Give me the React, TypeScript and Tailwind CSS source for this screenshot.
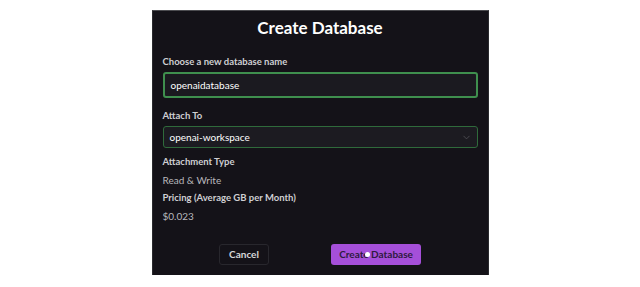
import React from 'react';
import { ChevronDown } from 'lucide-react';

const Label = ({ children }: { children: React.ReactNode }) => (
    <div className="text-[9.5px] font-bold text-[#cfcfd2] leading-[14px]">{children}</div>
);

export default function App() {
    return (
        <div className="w-[640px] h-[287px] bg-white overflow-hidden" style={{ fontFamily: 'Lato, "Noto Sans", sans-serif' }}>
            <div className="mx-auto mt-[10px] w-[337px] h-[265px] bg-[#141218] border-t border-[#4c4c50] border-x border-x-[#2a2a2e] px-[10px] flex flex-col">
                <h1 className="text-center text-white text-[17px] font-bold leading-[24px] mt-[5px]">Create Database</h1>

                <div className="mt-[15px]">
                    <Label>Choose a new database name</Label>
                </div>
                <div className="mt-[3px] h-[26px] rounded-[3px] border-2 border-[#3f8f4e] bg-[#1b1a20] flex items-center px-[6px]">
                    <span className="text-[10px] text-white">openaidatabase</span>
                </div>

                <div className="mt-[11px]">
                    <Label>Attach To</Label>
                </div>
                <div className="mt-[3px] h-[22px] rounded-[3px] border border-[#2f6a3b] bg-[#1c1b21] flex items-center justify-between pl-[6px] pr-[5px]">
                    <span className="text-[10px] text-white">openai-workspace</span>
                    <ChevronDown size={11} className="text-[#5c5c62]" strokeWidth={1.5} />
                </div>

                <div className="mt-[7px]">
                    <Label>Attachment Type</Label>
                </div>
                <div className="mt-[4px] text-[10px] text-[#b8b8bc] leading-[14px]">Read &amp; Write</div>

                <div className="mt-[4px]">
                    <Label>Pricing (Average GB per Month)</Label>
                </div>
                <div className="mt-[4px] text-[10px] text-[#b8b8bc] leading-[14px]">$0.023</div>

                <div className="mt-[21px] flex justify-center items-center gap-[62px]">
                    <button className="w-[50px] h-[21px] rounded-[3px] border border-[#28272d] bg-[#141218] text-[10px] font-bold text-[#d6d6d8]">
                        Cancel
                    </button>
                    <button className="relative w-[90px] h-[21px] rounded-[3px] bg-[#a54fd9] text-[10px] font-bold text-[#2e1a40]">
                        Create Database
                        <span className="absolute left-[34px] top-[8px] w-[5px] h-[5px] rounded-full bg-white" />
                    </button>
                </div>
            </div>
        </div>
    );
}
